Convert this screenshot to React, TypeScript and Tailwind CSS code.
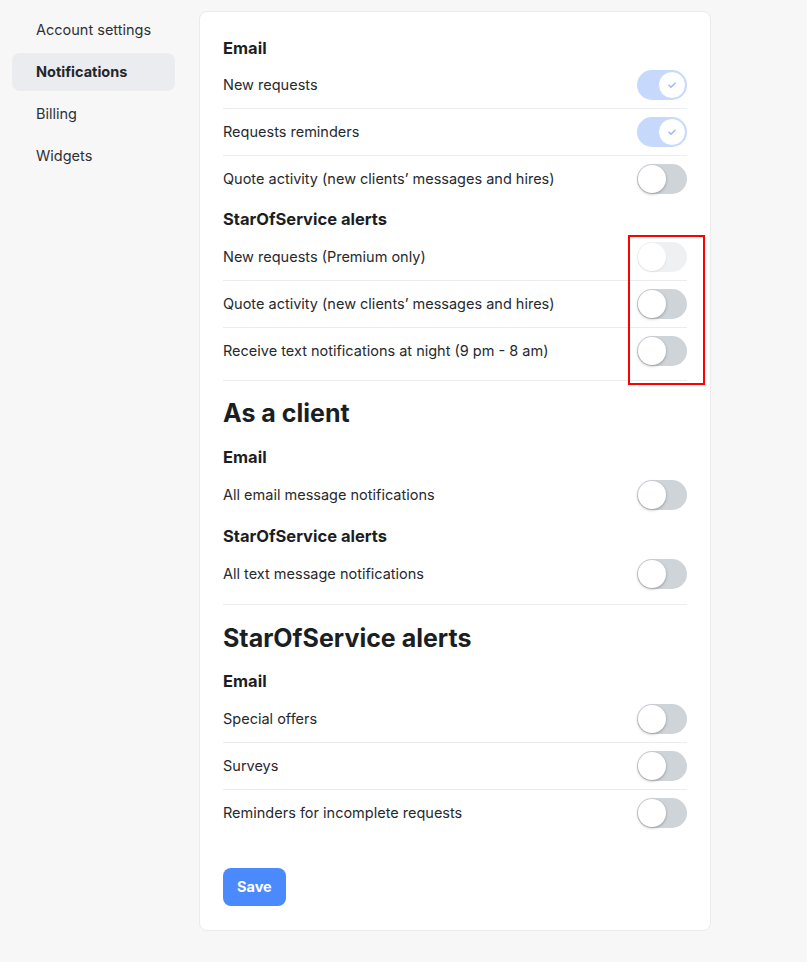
import React from 'react'

type Row = { label: string; on?: boolean; disabled?: boolean }

const Toggle = ({ on, disabled }: { on?: boolean; disabled?: boolean }) => {
  if (on) {
    return (
      <div className="w-[50px] h-[30px] rounded-full bg-[#c6d9fc] flex items-center justify-end p-[1px] shrink-0">
        <div className="w-[28px] h-[28px] rounded-full bg-white border border-[#c6d9fc] flex items-center justify-center">
          <svg width="12" height="12" viewBox="0 0 12 12" fill="none">
            <path d="M3 6.2l2 2 4-4" stroke="#9dbcf3" strokeWidth="1.6" strokeLinecap="round" strokeLinejoin="round" />
          </svg>
        </div>
      </div>
    )
  }
  return (
    <div
      className={`w-[50px] h-[30px] rounded-full flex items-center p-[1px] shrink-0 ${
        disabled ? 'bg-[#eef0f2]' : 'bg-[#cfd4d9]'
      }`}
    >
      <div
        className={`w-[28px] h-[28px] rounded-full bg-white ${
          disabled ? 'shadow-[0_1px_2px_rgba(0,0,0,0.08)]' : 'shadow-[0_1px_3px_rgba(0,0,0,0.3)]'
        }`}
      />
    </div>
  )
}

const RowList = ({ rows }: { rows: Row[] }) => (
  <div>
    {rows.map((r, i) => (
      <div
        key={r.label}
        className={`flex items-center justify-between ${
          i < rows.length - 1 ? 'h-[47px] border-b border-[#ececee]' : 'h-[46px]'
        }`}
      >
        <span className="text-[14.5px] text-[#26292e]">{r.label}</span>
        <Toggle on={r.on} disabled={r.disabled} />
      </div>
    ))}
  </div>
)

const SubHeading = ({ children }: { children: React.ReactNode }) => (
  <h3 className="text-[16.5px] leading-6 font-bold text-[#1b1e22]">{children}</h3>
)

const BigHeading = ({ children }: { children: React.ReactNode }) => (
  <h2 className="text-[25px] leading-8 font-bold text-[#1b1e22]">{children}</h2>
)

const nav = ['Account settings', 'Notifications', 'Billing', 'Widgets']

export default function App() {
  return (
    <div
      className="min-h-screen bg-[#f7f7f8] flex items-start pt-[11px] pl-3"
      style={{ fontFamily: 'Inter, "Noto Sans", sans-serif' }}
    >
      <nav className="w-[163px] flex flex-col gap-1">
        {nav.map((n) => (
          <div
            key={n}
            className={`h-[38px] flex items-center px-6 rounded-lg text-[14.5px] whitespace-nowrap ${
              n === 'Notifications' ? 'bg-[#ebecef] font-bold text-[#23262b]' : 'text-[#2e3136]'
            }`}
          >
            {n}
          </div>
        ))}
      </nav>

      <div className="relative ml-6 w-[512px] bg-white border border-[#ebebee] rounded-lg px-[23px] pt-6 pb-6">
        <SubHeading>Email</SubHeading>
        <div className="mt-[2px]">
          <RowList
            rows={[
              { label: 'New requests', on: true },
              { label: 'Requests reminders', on: true },
              { label: 'Quote activity (new clients’ messages and hires)' },
            ]}
          />
        </div>
        <div className="mt-[5px]">
          <SubHeading>StarOfService alerts</SubHeading>
        </div>
        <div className="mt-[3px] pb-[6px] border-b border-[#ececee]">
          <RowList
            rows={[
              { label: 'New requests (Premium only)', disabled: true },
              { label: 'Quote activity (new clients’ messages and hires)' },
              { label: 'Receive text notifications at night (9 pm - 8 am)' },
            ]}
          />
        </div>

        <div className="mt-4">
          <BigHeading>As a client</BigHeading>
        </div>
        <div className="mt-4">
          <SubHeading>Email</SubHeading>
        </div>
        <div className="mt-[3px]">
          <RowList rows={[{ label: 'All email message notifications' }]} />
        </div>
        <div className="mt-[6px]">
          <SubHeading>StarOfService alerts</SubHeading>
        </div>
        <div className="mt-[3px] pb-[7px] border-b border-[#ececee]">
          <RowList rows={[{ label: 'All text message notifications' }]} />
        </div>

        <div className="mt-[17px]">
          <BigHeading>StarOfService alerts</BigHeading>
        </div>
        <div className="mt-[15px]">
          <SubHeading>Email</SubHeading>
        </div>
        <div className="mt-[3px]">
          <RowList
            rows={[
              { label: 'Special offers' },
              { label: 'Surveys' },
              { label: 'Reminders for incomplete requests' },
            ]}
          />
        </div>

        <button className="mt-8 h-[38px] px-[14px] rounded-lg bg-[#4a8afc] text-white text-[14.5px] font-bold">
          Save
        </button>

        <div className="absolute left-[428px] top-[223px] w-[77px] h-[150px] border-2 border-[#ff0000]" />
      </div>
    </div>
  )
}
